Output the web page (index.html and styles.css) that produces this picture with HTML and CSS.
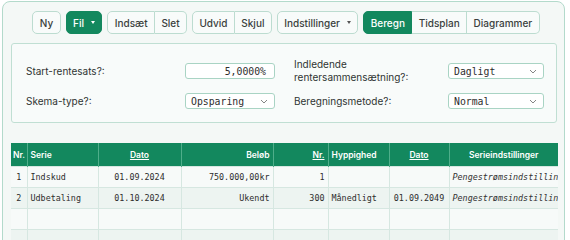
FILE: index.html
```html
<!DOCTYPE html>
<html lang="da">
<head>
<meta charset="utf-8">
<title>Rente</title>
<link rel="stylesheet" href="styles.css">
</head>
<body>
<div class="app">
  <div class="toolbar">
    <div class="grp"><button class="btn">Ny</button></div>
    <div class="grp"><button class="btn active">Fil <span class="caret"></span></button></div>
    <div class="grp"><button class="btn">Indsæt</button><button class="btn">Slet</button></div>
    <div class="grp"><button class="btn">Udvid</button><button class="btn">Skjul</button></div>
    <div class="grp"><button class="btn">Indstillinger <span class="caret dark"></span></button></div>
    <div class="grp"><button class="btn active">Beregn</button><button class="btn">Tidsplan</button><button class="btn">Diagrammer</button></div>
  </div>
  <div class="panel">
    <div class="lbl">Start-rentesats?:</div>
    <div class="field right">5,0000%</div>
    <div></div>
    <div class="lbl">Indledende<br>rentersammensætning?:</div>
    <div class="field sel">Dagligt <svg class="chev" width="8" height="5" viewBox="0 0 8 5"><path d="M1 1l3 3 3-3" fill="none" stroke="#777" stroke-width="0.9"/></svg></div>
    <div class="lbl">Skema-type?:</div>
    <div class="field sel">Opsparing <svg class="chev" width="8" height="5" viewBox="0 0 8 5"><path d="M1 1l3 3 3-3" fill="none" stroke="#777" stroke-width="0.9"/></svg></div>
    <div></div>
    <div class="lbl">Beregningsmetode?:</div>
    <div class="field sel">Normal <svg class="chev" width="8" height="5" viewBox="0 0 8 5"><path d="M1 1l3 3 3-3" fill="none" stroke="#777" stroke-width="0.9"/></svg></div>
  </div>
  <table class="grid">
    <colgroup>
      <col style="width:16px"><col style="width:71px"><col style="width:83px"><col style="width:92px"><col style="width:55px"><col style="width:61px"><col style="width:60px"><col style="width:109px">
    </colgroup>
    <thead>
      <tr>
        <th class="l">Nr.</th><th class="l">Serie</th><th class="c"><u>Dato</u></th><th class="r">Beløb</th><th class="r"><u>Nr.</u></th><th class="l">Hyppighed</th><th class="c"><u>Dato</u></th><th class="c">Serieindstillinger</th>
      </tr>
    </thead>
    <tbody>
      <tr class="odd">
        <td class="c">1</td><td>Indskud</td><td class="c">01.09.2024</td><td class="r">750.000,00kr</td><td class="r">1</td><td></td><td></td><td class="it">Pengestrømsindstillinger</td>
      </tr>
      <tr class="even">
        <td class="c">2</td><td>Udbetaling</td><td class="c">01.10.2024</td><td class="r">Ukendt</td><td class="r">300</td><td>Månedligt</td><td class="c">01.09.2049</td><td class="it">Pengestrømsindstillinger</td>
      </tr>
      <tr class="odd"><td></td><td></td><td></td><td></td><td></td><td></td><td></td><td></td></tr>
      <tr class="even"><td></td><td></td><td></td><td></td><td></td><td></td><td></td><td></td></tr>
    </tbody>
  </table>
</div>
</body>
</html>
```
FILE: styles.css
```css
html, body { margin: 0; padding: 0; background: #ffffff; overflow: hidden; }
body { font-family: Inter, "Noto Sans", sans-serif; color: #2f3432; height: 240px; }
.app {
  margin: 1px 0 0 2px;
  width: 563px;
  height: 250px;
  box-sizing: border-box;
  border: 1px solid #b3dacb;
  border-radius: 8px 8px 0 0;
  background: #f4f8f6;
  overflow: hidden;
}
.toolbar {
  display: flex;
  justify-content: center;
  gap: 5px;
  padding: 9px 0 0 5px;
}
.grp { display: flex; }
.btn {
  font-family: Inter, sans-serif;
  font-size: 10px;
  font-weight: 500;
  color: #3a3f3d;
  height: 23px;
  padding: 0 6.4px;
  border: 1px solid #bcdcd0;
  background: #f8fbfa;
  margin: 0;
  display: flex;
  align-items: center;
  gap: 5px;
}
.grp .btn:first-child { border-radius: 5px 0 0 5px; }
.grp .btn:last-child { border-radius: 0 5px 5px 0; }
.grp .btn:only-child { border-radius: 5px; }
.grp .btn + .btn { border-left: none; }
.btn.active { background: #13885e; border-color: #13885e; color: #ffffff; }
.caret {
  display: inline-block;
  width: 0; height: 0;
  border-left: 2.5px solid transparent;
  border-right: 2.5px solid transparent;
  border-top: 3px solid #ffffff;
  margin-left: 2px;
}
.caret.dark { border-top-color: #555; }
.panel {
  margin: 9px 7px 0 8px;
  border: 1px solid #c0dfd3;
  border-radius: 3px;
  background: #f8fbfa;
  padding: 13px 12px 7px 14px;
  display: grid;
  grid-template-columns: 159px 90px 19px 154px 96px;
  grid-template-rows: 28px 28px;
  row-gap: 2px;
  align-items: center;
}
.lbl { font-size: 10px; line-height: 13px; color: #2f3432; }
.field {
  height: 16px;
  box-sizing: border-box;
  border: 1px solid #a9d4c4;
  border-radius: 3px;
  background: #ffffff;
  font-family: "DejaVu Sans Mono", monospace;
  font-size: 9.8px;
  color: #2d2d2d;
  display: flex;
  align-items: center;
  padding: 0 5px;
}
.field.right { justify-content: flex-end; padding-right: 8px; }
.field.sel { justify-content: space-between; padding-right: 6px; }
.chev { display: block; }
.grid {
  margin: 20px 0 0 8px;
  width: 547px;
  table-layout: fixed;
  border-collapse: collapse;
  font-family: "DejaVu Sans Mono", monospace;
  font-size: 8.4px;
  color: #2d2d2d;
}
.grid th {
  background: #13885e;
  color: #ffffff;
  font-family: Inter, sans-serif;
  font-weight: 600;
  font-size: 8.5px;
  height: 23px;
  padding: 0 3px;
  border-left: 1px solid #4fae8a;
  white-space: nowrap;
  overflow: hidden;
}
.grid th:first-child { border-left: none; padding: 0 2px; }
.grid td {
  height: 21px;
  box-sizing: border-box;
  padding: 0 3px;
  border: 1px solid #d6e7e1;
  white-space: nowrap;
  overflow: hidden;
  text-overflow: clip;
}
.grid tr td:first-child { border-left: none; }
.grid tr td:last-child { border-right: none; }
.grid .odd td { background: #f7faf9; }
.grid .even td { background: #edf4f1; }
.l { text-align: left; }
.c { text-align: center; }
.r { text-align: right; }
.it { font-style: italic; color: #333; }
```
